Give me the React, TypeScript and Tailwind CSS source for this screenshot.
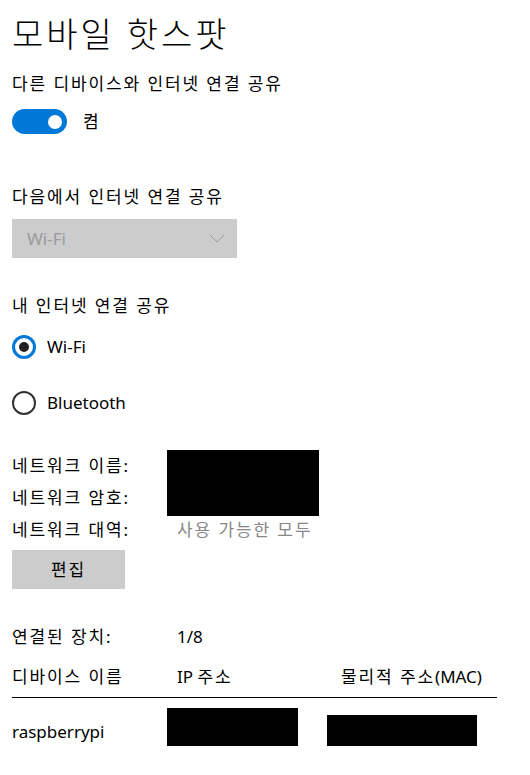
const ko = "tracking-[1.9px]";

export default function App() {
  return (
    <div
      className="min-h-screen w-[530px] bg-white pl-3 text-black"
      style={{ fontFamily: '"Noto Sans", "Noto Sans CJK KR", sans-serif' }}
    >
      <h1 className="mt-[14px] text-[34px] font-light leading-[40px] tracking-[3px]">모바일 핫스팟</h1>

      <p className={`mt-[18px] text-[17px] leading-[24px] ${ko}`}>다른 디바이스와 인터넷 연결 공유</p>

      {/* Toggle */}
      <div className="mt-[13px] flex items-center gap-4">
        <div className="flex h-[25px] w-[55px] items-center justify-end rounded-full bg-[#0078d7] pr-[5px]">
          <div className="h-[14px] w-[14px] rounded-full bg-white" />
        </div>
        <span className="text-[17px] leading-[24px]">켬</span>
      </div>

      <p className={`mt-[51px] text-[17px] leading-[24px] ${ko}`}>다음에서 인터넷 연결 공유</p>

      {/* Dropdown */}
      <div className="mt-[10px] flex h-[39px] w-[225px] items-center justify-between bg-[#cccccc] pl-[15px] pr-[12px]">
        <span className="text-[17px] text-[#9a9a9a]">Wi-Fi</span>
        <svg width="16" height="9" viewBox="0 0 16 9" fill="none">
          <path d="M1 1l7 7 7-7" stroke="#9a9a9a" strokeWidth="1" />
        </svg>
      </div>

      <p className={`mt-[36px] text-[17px] leading-[24px] ${ko}`}>내 인터넷 연결 공유</p>

      {/* Radios */}
      <div className="mt-[17px] flex items-center gap-[11px]">
        <div className="flex h-[24px] w-[24px] items-center justify-center rounded-full border-[3px] border-[#0078d7]">
          <div className="h-[10px] w-[10px] rounded-full bg-[#222]" />
        </div>
        <span className="text-[17px] leading-[24px]">Wi-Fi</span>
      </div>
      <div className="mt-[32px] flex items-center gap-[11px]">
        <div className="h-[24px] w-[24px] rounded-full border-[2.5px] border-[#333]" />
        <span className="text-[17px] leading-[24px]">Bluetooth</span>
      </div>

      {/* Network info */}
      <div className={`mt-[35px] grid grid-cols-[165px_auto] grid-rows-[32px_32px_32px] text-[17px] leading-[32px] ${ko}`}>
        <span>네트워크 이름:</span>
        <div className="row-span-2 -ml-[10px] h-[66px] w-[152px] bg-black" />
        <span>네트워크 암호:</span>
        <span>네트워크 대역:</span>
        <span className="text-[#888]">사용 가능한 모두</span>
      </div>

      <button className={`mt-[4px] flex h-[39px] w-[113px] items-center justify-center bg-[#cccccc] text-[17px] ${ko}`}>
        편집
      </button>

      {/* Connected devices */}
      <div className="mt-[36px] grid grid-cols-[165px_auto] text-[17px] leading-[24px]">
        <span className={ko}>연결된 장치:</span>
        <span>1/8</span>
      </div>

      <div className="mt-[16px] grid w-[485px] grid-cols-[165px_164px_auto] text-[17px] leading-[24px]">
        <span className={ko}>디바이스 이름</span>
        <span>
          IP <span className={ko}>주소</span>
        </span>
        <span>
          <span className={ko}>물리적 주소</span>(MAC)
        </span>
      </div>
      <div className="mt-[8px] h-px w-[485px] bg-black" />

      <div className="mt-[10px] grid w-[485px] grid-cols-[155px_160px_auto] items-end text-[17px] leading-[24px]">
        <span className="pb-[2px]">raspberrypi</span>
        <div className="h-[38px] w-[131px] bg-black" />
        <div className="h-[31px] w-[150px] bg-black" />
      </div>
    </div>
  );
}
